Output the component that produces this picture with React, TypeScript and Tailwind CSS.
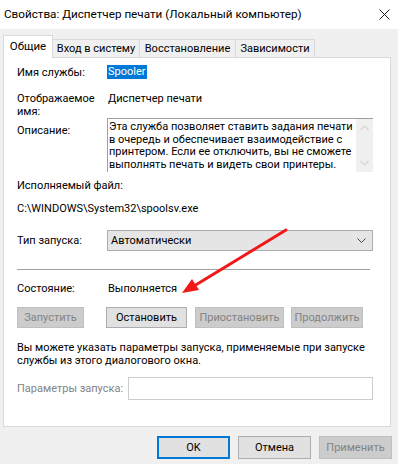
import React from "react";

function WinButton({
  label,
  width,
  disabled,
  focused,
  className,
}: {
  label: string;
  width: string;
  disabled?: boolean;
  focused?: boolean;
  className?: string;
}) {
  let look = "bg-[#e1e1e1] border border-[#adadad] text-black";
  if (disabled) look = "bg-[#cccccc] border border-[#bfbfbf] text-[#838383]";
  if (focused) look = "bg-[#e1e1e1] border-2 border-[#0078d7] text-black";
  return (
    <div
      className={`${width} h-full flex items-center justify-center shrink-0 whitespace-nowrap ${look} ${className || ""}`}
    >
      {label}
    </div>
  );
}

export default function App() {
  return (
    <div className="relative w-[398px] h-[464px] bg-[#f0f0f0] text-[11px] leading-[15px] text-black font-['Roboto',sans-serif] overflow-hidden whitespace-nowrap">
      {/* Title bar */}
      <div className="h-[29px] bg-white flex items-center justify-between pl-[4px] pr-[8px]">
        <span className="text-[11.7px]">Свойства: Диспетчер печати (Локальный компьютер)</span>
        <svg width="11" height="11" viewBox="0 0 11 11">
          <path d="M0.5 0.5 L10.5 10.5 M10.5 0.5 L0.5 10.5" stroke="#1a1a1a" strokeWidth="1" />
        </svg>
      </div>

      {/* Tabs */}
      <div className="flex items-end h-[22px] mt-[6px] pl-[3px]">
        <div className="relative z-10 w-[50px] h-[23px] -mb-px bg-white border border-b-0 border-[#d9d9d9] flex items-center justify-center pb-[2px] text-[11.5px]">
          Общие
        </div>
        <div className="w-[87px] h-[18px] border-t border-r border-[#d9d9d9] flex items-center justify-center">
          Вход в систему
        </div>
        <div className="w-[96px] h-[18px] border-t border-r border-[#d9d9d9] flex items-center justify-center">
          Восстановление
        </div>
        <div className="w-[79px] h-[18px] border-t border-r border-[#d9d9d9] flex items-center justify-center">
          Зависимости
        </div>
      </div>

      {/* Panel */}
      <div className="ml-[3px] w-[388px] h-[370px] bg-white border border-[#d9d9d9] pl-[13px] flex flex-col">
        <div className="flex h-[16px] mt-[6px] items-center">
          <div className="w-[90px]">Имя службы:</div>
          <span className="bg-[#0078d7] text-white px-[1px] leading-[14px]">Spooler</span>
        </div>

        <div className="flex mt-[12px] leading-[13px]">
          <div className="w-[90px]">
            Отображаемое
            <br />
            имя:
          </div>
          <div className="pl-[1px]">Диспетчер печати</div>
        </div>

        <div className="flex">
          <div className="w-[90px] pt-[6px] leading-[13px]">Описание:</div>
          <div className="w-[266px] h-[54px] flex border-t border-l border-[#a0a0a0]">
            <div className="flex-1 pl-[1px] pt-[2px] leading-[12.7px] overflow-hidden">
              Эта служба позволяет ставить задания печати
              <br />
              в очередь и обеспечивает взаимодействие с
              <br />
              принтером. Если ее отключить, вы не сможете
              <br />
              выполнять печать и видеть свои принтеры.
            </div>
            <div className="w-[17px] bg-[#f0f0f0] flex flex-col items-center justify-between py-[6px]">
              <svg width="9" height="6" viewBox="0 0 9 6">
                <path d="M0.5 5 L4.5 1 L8.5 5" fill="none" stroke="#c0c0c0" strokeWidth="1" />
              </svg>
              <svg width="9" height="6" viewBox="0 0 9 6">
                <path d="M0.5 1 L4.5 5 L8.5 1" fill="none" stroke="#c0c0c0" strokeWidth="1" />
              </svg>
            </div>
          </div>
        </div>

        <div className="mt-[6px]">Исполняемый файл:</div>
        <div className="mt-[8px]">C:\WINDOWS\System32\spoolsv.exe</div>

        <div className="flex items-center mt-[14px] h-[21px]">
          <div className="w-[90px]">Тип запуска:</div>
          <div className="w-[266px] h-full bg-[#e5e5e5] border border-[#adadad] flex items-center justify-between pl-[3px] pr-[6px]">
            <span>Автоматически</span>
            <svg width="9" height="5" viewBox="0 0 9 5">
              <path d="M0.5 0.5 L4.5 4.5 L8.5 0.5" fill="none" stroke="#444" strokeWidth="1" />
            </svg>
          </div>
        </div>

        <div className="mt-[18px] w-[353px] h-px bg-[#a0a0a0]" />

        <div className="flex mt-[11px]">
          <div className="w-[90px]">Состояние:</div>
          <div className="pl-[1px]">Выполняется</div>
        </div>

        <div className="flex mt-[11px] h-[21px]">
          <WinButton label="Запустить" width="w-[67px]" disabled />
          <WinButton label="Остановить" width="w-[81px]" className="ml-[22px]" />
          <WinButton label="Приостановить" width="w-[89px]" className="ml-[8px]" disabled />
          <WinButton label="Продолжить" width="w-[72px]" className="ml-[7px]" disabled />
        </div>

        <div className="mt-[13px] leading-[13px]">
          Вы можете указать параметры запуска, применяемые при запуске
          <br />
          службы из этого диалогового окна.
        </div>

        <div className="flex items-center mt-[10px] h-[23px]">
          <div className="w-[111px] text-[#838383]">Параметры запуска:</div>
          <div className="w-[245px] h-full border border-[#cccccc]" />
        </div>
      </div>

      {/* Dialog buttons */}
      <div className="flex h-[23px] mt-[9px] pl-[157px]">
        <WinButton label="OK" width="w-[73px]" focused />
        <WinButton label="Отмена" width="w-[73px]" className="ml-[8px]" />
        <WinButton label="Применить" width="w-[73px]" className="ml-[8px]" disabled />
      </div>

      {/* Red annotation arrow */}
      <svg className="absolute left-0 top-0 pointer-events-none" width="398" height="464" viewBox="0 0 398 464">
        <line x1="286" y1="230" x2="194" y2="286" stroke="#f01818" strokeWidth="3" strokeLinecap="round" />
        <polygon points="182,293 199,290 192,279" fill="#f01818" />
      </svg>
    </div>
  );
}
